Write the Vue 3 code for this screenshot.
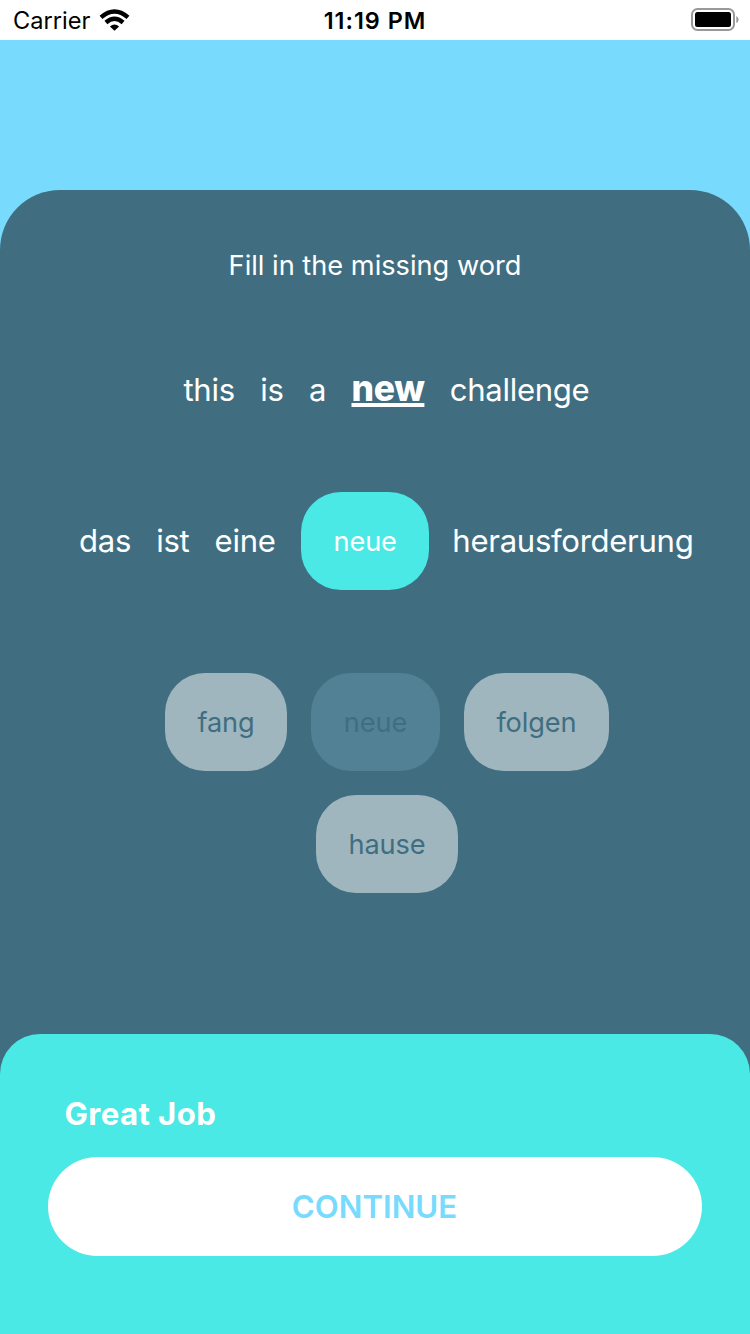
<script setup>
const english = ['this', 'is', 'a', 'new', 'challenge']
const options = ['fang', 'neue', 'folgen', 'hause']
</script>

<template>
  <div class="screen">
    <header class="status">
      <div class="side">
        <span class="carrier">Carrier</span>
        <svg class="wifi" width="31" height="22" viewBox="0 0 31 22">
          <path d="M15.5 21.8 L10.9 17.5 Q15.5 13.4 20.1 17.5 Z" fill="#000" />
          <path d="M6.9 13.5 Q15.5 6 24.1 13.5" fill="none" stroke="#000" stroke-width="4.4" />
          <path d="M2 8.3 Q15.5 -3.4 29 8.3" fill="none" stroke="#000" stroke-width="4.4" />
        </svg>
      </div>
      <span class="time">11:19 PM</span>
      <div class="side end">
        <svg width="49" height="24" viewBox="0 0 49 24">
          <rect x="2" y="1" width="42" height="21" rx="5.5" fill="none" stroke="#999" stroke-width="2" />
          <rect x="5" y="4" width="36" height="15" rx="2.5" fill="#000" />
          <path d="M46.3 8 Q48.6 9 48.6 11.5 Q48.6 14 46.3 15 Z" fill="#999" />
        </svg>
      </div>
    </header>
    <main class="panel">
      <h1 class="title">Fill in the missing word</h1>
      <div class="sentence english">
        <span v-for="w in english" :key="w" :class="['word', 'w-' + w]">{{ w }}</span>
      </div>
      <div class="sentence german">
        <span class="word">das</span>
        <span class="word">ist</span>
        <span class="word">eine</span>
        <span class="chip answer">neue</span>
        <span class="word">herausforderung</span>
      </div>
      <div class="options">
        <span v-for="o in options" :key="o" :class="['chip', 'option', o, { used: o === 'neue' }]">{{ o }}</span>
      </div>
    </main>
    <footer class="result">
      <h2 class="praise">Great Job</h2>
      <button class="continue">CONTINUE</button>
    </footer>
  </div>
</template>

<style>
body {
  margin: 0;
}
</style>

<style scoped>
.screen {
  width: 750px;
  height: 1334px;
  display: flex;
  flex-direction: column;
  overflow: hidden;
  background: #78dafc;
  font-family: Inter, "Liberation Sans", sans-serif;
  color: #fff;
}
.status {
  box-sizing: border-box;
  height: 40px;
  padding: 0 11px 0 13px;
  display: flex;
  align-items: center;
  background: #fff;
  color: #000;
  font-size: 23.6px;
}
.side {
  flex: 1;
  display: flex;
  align-items: center;
  gap: 9px;
}
.carrier {
  padding-top: 1px;
}
.end {
  justify-content: flex-end;
}
.time {
  padding-top: 1px;
  margin-right: 2px;
  font-size: 23.4px;
  font-weight: 600;
  letter-spacing: 1px;
}
.panel {
  box-sizing: border-box;
  height: 844px;
  flex: none;
  margin-top: 150px;
  padding-top: 59px;
  border-radius: 60px 60px 0 0;
  background: #406e80;
  box-shadow: 0 60px 0 #406e80;
}
.title {
  margin: 0;
  line-height: 34px;
  text-align: center;
  font-size: 27.2px;
  font-weight: 400;
}
.sentence {
  display: flex;
  align-items: center;
  font-size: 31.1px;
  letter-spacing: -0.3px;
  white-space: nowrap;
}
.english {
  align-items: baseline;
  height: 40px;
  line-height: 40px;
  margin-top: 86px;
  padding-left: 183.5px;
  gap: 25.4px;
}
.w-new {
  font-size: 35.5px;
  font-weight: 800;
  letter-spacing: -0.4px;
  text-decoration: underline;
  text-decoration-thickness: 4px;
  text-underline-offset: 2px;
  text-decoration-skip-ink: none;
}
.german {
  height: 98px;
  margin-top: 83px;
  padding-left: 79px;
  gap: 25.2px;
}
.chip {
  box-sizing: border-box;
  height: 98px;
  border-radius: 40px;
  display: flex;
  align-items: center;
  justify-content: center;
  font-size: 27.2px;
  letter-spacing: -0.1px;
}
.answer {
  width: 128px;
  margin: 0 -2px 0 0.4px;
  background: #4ae9e6;
}
.options {
  margin: 83px 0 0 24px;
  display: flex;
  flex-wrap: wrap;
  justify-content: center;
  gap: 24px;
  padding: 0 100px;
}
.option {
  background: #9fb6bf;
  color: #406e80;
}
.fang {
  width: 122px;
}
.neue.option {
  width: 129px;
}
.folgen {
  width: 145px;
}
.hause {
  width: 142px;
}
.used {
  background: #528196;
}
.result {
  position: relative;
  box-sizing: border-box;
  height: 300px;
  padding: 60px 48px 0;
  border-radius: 40px 40px 0 0;
  background: #4ae9e6;
}
.praise {
  margin: 0 0 23px 16.5px;
  line-height: 40px;
  font-size: 31.2px;
  font-weight: 700;
  letter-spacing: 0.4px;
}
.continue {
  display: block;
  width: 654px;
  height: 99px;
  border: 0;
  border-radius: 50px;
  padding: 0 1px 0 0;
  background: #fff;
  color: #78dafc;
  font: 600 31.2px Inter, "Liberation Sans", sans-serif;
}
</style>
